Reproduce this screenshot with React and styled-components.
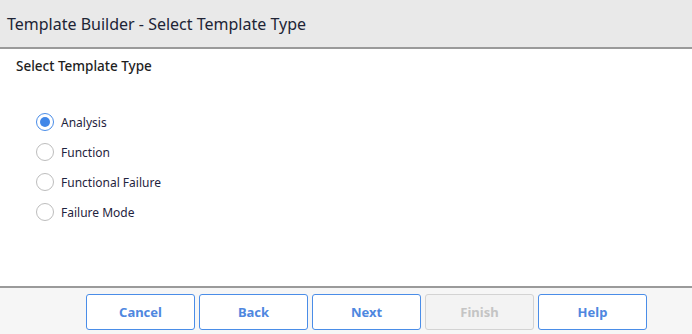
import styled, { createGlobalStyle } from 'styled-components';
import { useState } from 'react';

const Global = createGlobalStyle`
  html, body { margin: 0; padding: 0; background: #fff; }
  body { font-family: 'Noto Sans', 'Open Sans', sans-serif; color: #1f2233; }
`;

const Page = styled.div`
  width: 692px;
  height: 334px;
  display: flex;
  flex-direction: column;
  overflow: hidden;
`;

const Header = styled.div`
  height: 49px;
  box-sizing: border-box;
  background: #e9e9e9;
  border-bottom: 2px solid #9a9a9a;
  display: flex;
  align-items: center;
  padding: 1px 0 0 7px;
  font-size: 16px;
  color: #202435;
`;

const Body = styled.div`
  flex: 1;
  padding: 9px 16px 0;
`;

const Subtitle = styled.div`
  font-size: 13.5px;
  font-weight: 500;
  color: #1e1e1e;
  line-height: 16px;
`;

const RadioList = styled.div`
  display: flex;
  flex-direction: column;
  gap: 10px;
  margin-top: 38px;
  padding-left: 20px;
`;

const Option = styled.label`
  display: flex;
  align-items: center;
  gap: 7px;
  height: 20px;
  font-size: 12px;
  color: #1f2440;
  cursor: pointer;
`;

const Circle = styled.span`
  width: 16px;
  height: 16px;
  border-radius: 50%;
  border: 1.5px solid ${p => (p.$on ? '#4a8de8' : '#bdbdbd')};
  display: flex;
  align-items: center;
  justify-content: center;
  background: #fff;
  box-sizing: content-box;

  &::after {
    content: '';
    width: 10px;
    height: 10px;
    border-radius: 50%;
    background: ${p => (p.$on ? '#3f86e8' : 'transparent')};
  }
`;

const Footer = styled.div`
  height: 46px;
  border-top: 2px solid #9a9a9a;
  background: #f6f6f6;
  display: flex;
  align-items: center;
  gap: 4px;
  padding-left: 86px;
`;

const Button = styled.button`
  width: 109px;
  height: 36px;
  margin-top: 1px;
  border-radius: 3px;
  border: 1px solid ${p => (p.disabled ? '#d3d3d3' : '#4a8de8')};
  background: ${p => (p.disabled ? '#f3f3f3' : '#fff')};
  color: ${p => (p.disabled ? '#c4c4c4' : '#4f87df')};
  font-family: 'Noto Sans', sans-serif;
  font-weight: 700;
  font-size: 13px;
  cursor: ${p => (p.disabled ? 'default' : 'pointer')};
`;

const options = ['Analysis', 'Function', 'Functional Failure', 'Failure Mode'];

export default function App() {
  const [selected, setSelected] = useState('Analysis');
  return (
    <Page>
      <Global />
      <Header>Template Builder - Select Template Type</Header>
      <Body>
        <Subtitle>Select Template Type</Subtitle>
        <RadioList>
          {options.map(o => (
            <Option key={o} onClick={() => setSelected(o)}>
              <Circle $on={selected === o} />
              {o}
            </Option>
          ))}
        </RadioList>
      </Body>
      <Footer>
        <Button>Cancel</Button>
        <Button>Back</Button>
        <Button>Next</Button>
        <Button disabled>Finish</Button>
        <Button>Help</Button>
      </Footer>
    </Page>
  );
}
